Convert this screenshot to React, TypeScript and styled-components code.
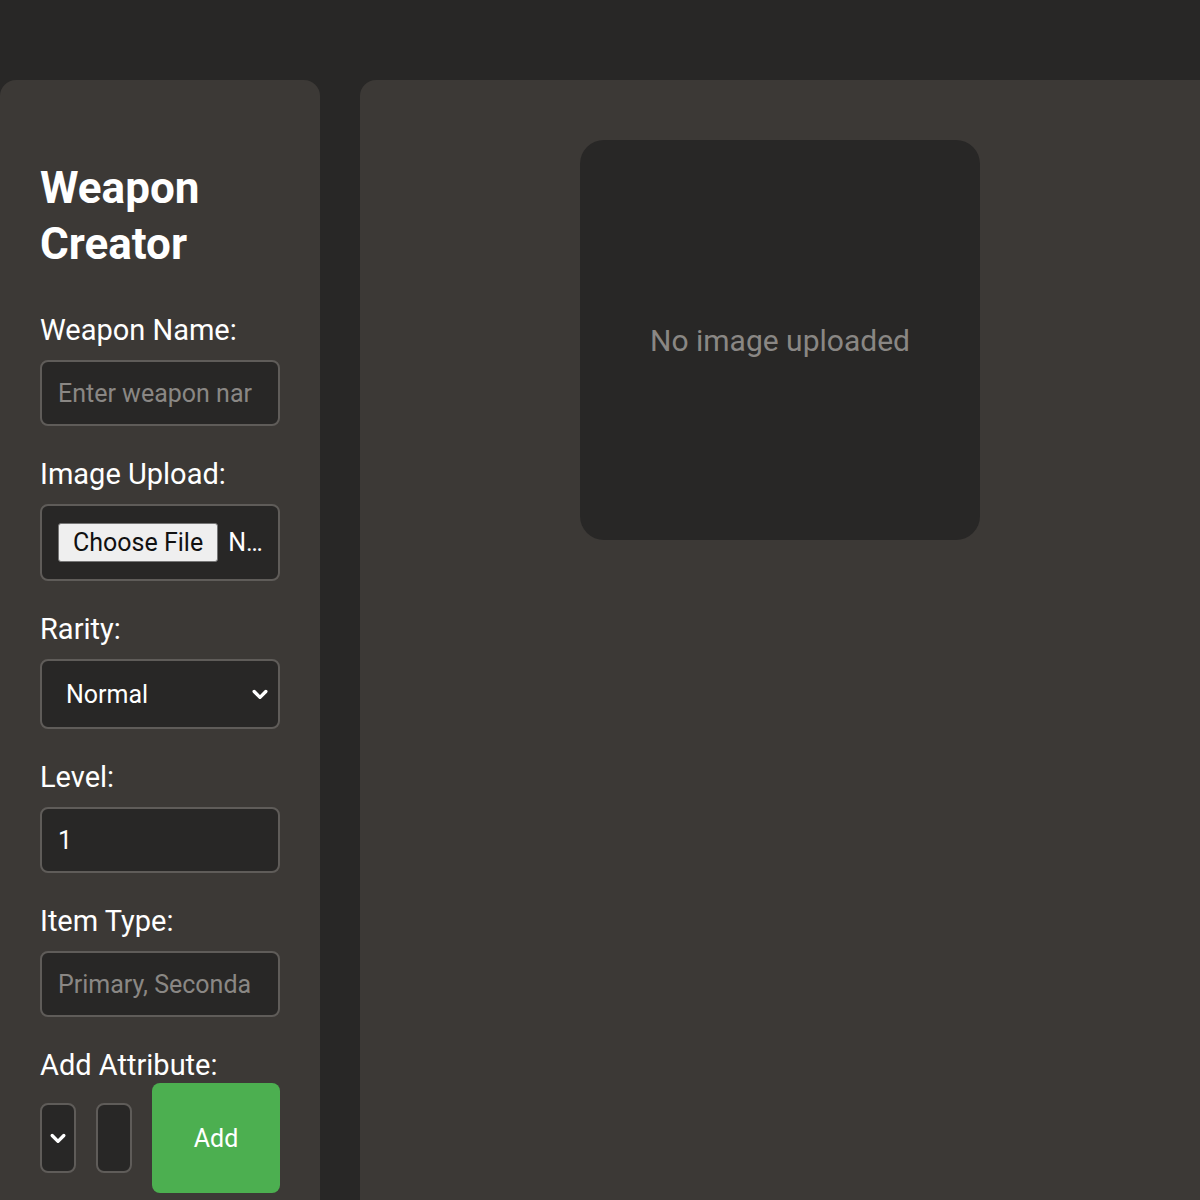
import React from "react";
import styled, { createGlobalStyle } from "styled-components";

const Global = createGlobalStyle`
  html, body { margin: 0; background: #282726; font-family: Roboto, "Liberation Sans", sans-serif; color: #fff; }
  * { box-sizing: border-box; }
`;

const Page = styled.div`
  display: flex; gap: 40px; padding-top: 80px; height: 1200px; overflow: hidden;
`;
const Sidebar = styled.div`
  width: 320px; flex-shrink: 0; background: #3c3936; border-radius: 16px 16px 0 0;
  padding: 80px 40px 0 40px; display: flex; flex-direction: column;
`;
const Title = styled.h1`
  margin: 0 0 40px; font-size: 44px; line-height: 56px; font-weight: 700;
`;
const Label = styled.div`
  font-size: 29px; line-height: 36px; margin-bottom: 12px;
`;
const Group = styled.div`
  display: flex; flex-direction: column; margin-bottom: 30px;
`;
const Field = styled.div<{ $h: number }>`
  height: ${p => p.$h}px; width: 240px; background: #282726; border: 2px solid #5f5c59;
  border-radius: 8px; display: flex; align-items: center; padding: 0 16px;
  font-size: 25px; color: #fff; overflow: hidden; white-space: nowrap;
`;
const Placeholder = styled.span` color: #8a8784; `;
const FileBtn = styled.span`
  background: #efefef; color: #111; border: 1px solid #767676; border-radius: 3px;
  padding: 4px 14px; font-size: 25px; margin-right: 10px;
`;
const SelectField = styled(Field)`
  justify-content: space-between; padding: 0 8px 0 24px;
`;
const Row = styled.div` display: flex; align-items: center; gap: 20px; margin-top: -12px; `;
const Mini = styled.div`
  width: 36px; height: 70px; background: #282726; border: 2px solid #5f5c59; border-radius: 8px;
  display: flex; align-items: center; justify-content: center;
`;
const AddBtn = styled.div`
  width: 128px; height: 110px; background: #4caf50; border-radius: 8px; display: flex;
  align-items: center; justify-content: center; font-size: 25px; color: #fff;
`;
const Main = styled.div`
  flex: 1; background: #3c3936; border-radius: 16px 0 0 0; padding: 60px 220px;
`;
const Preview = styled.div`
  width: 400px; height: 400px; background: #282726; border-radius: 24px; display: flex;
  align-items: center; justify-content: center; font-size: 30px; color: #8a8784;
`;

const Chevron = () => (
  <svg width="20" height="20" viewBox="0 0 24 24" fill="none" stroke="#fff" strokeWidth="4" strokeLinecap="round" strokeLinejoin="round">
    <path d="M5 9l7 7 7-7" />
  </svg>
);

export default function App() {
  return (
    <Page>
      <Global />
      <Sidebar>
        <Title>Weapon<br />Creator</Title>
        <Group><Label>Weapon Name:</Label><Field $h={66}><Placeholder>Enter weapon nar</Placeholder></Field></Group>
        <Group><Label>Image Upload:</Label><Field $h={77}><FileBtn>Choose File</FileBtn>N…</Field></Group>
        <Group><Label>Rarity:</Label><SelectField $h={70}>Normal<Chevron /></SelectField></Group>
        <Group><Label>Level:</Label><Field $h={66} style={{ paddingLeft: 16 }}>1</Field></Group>
        <Group><Label>Item Type:</Label><Field $h={66}><Placeholder>Primary, Seconda</Placeholder></Field></Group>
        <Group>
          <Label>Add Attribute:</Label>
          <Row>
            <Mini><Chevron /></Mini>
            <Mini />
            <AddBtn>Add</AddBtn>
          </Row>
        </Group>
      </Sidebar>
      <Main><Preview>No image uploaded</Preview></Main>
    </Page>
  );
}
